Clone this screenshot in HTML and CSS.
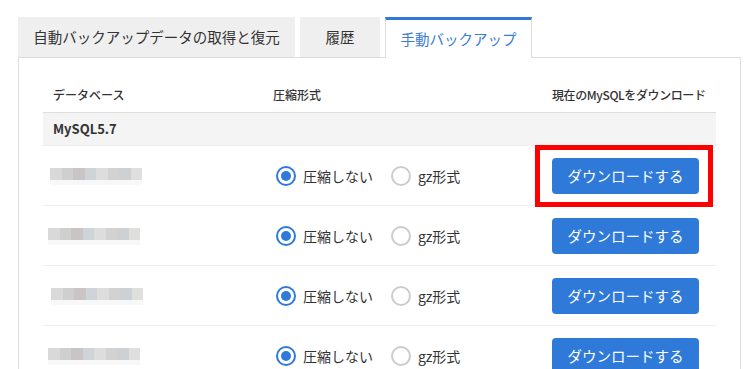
FILE: index.html
```html
<!DOCTYPE html>
<html lang="ja">
<head>
    <meta charset="UTF-8">
    <title>手動バックアップ</title>
    <link rel="stylesheet" href="styles.css">
</head>
<body>
<div class="wrap">
    <ul class="tabs">
        <li class="tab tab-auto">自動バックアップデータの取得と復元</li>
        <li class="tab tab-history">履歴</li>
        <li class="tab tab-manual current">手動バックアップ</li>
    </ul>
    <div class="panel">
        <div class="table">
            <div class="row head">
                <div class="cell">データベース</div>
                <div class="cell">圧縮形式</div>
                <div class="cell">現在のMySQLをダウンロード</div>
            </div>
            <div class="group">MySQL5.7</div>

            <div class="row">
                <div class="cell"><span class="blur"><i></i><i></i><i></i><i></i><i></i><i></i><i></i><i></i></span></div>
                <div class="cell radios">
                    <label class="radio"><span class="dot checked"></span>圧縮しない</label>
                    <label class="radio"><span class="dot"></span>gz形式</label>
                </div>
                <div class="cell"><span class="mark"><button class="btn">ダウンロードする</button></span></div>
            </div>
            <div class="row">
                <div class="cell"><span class="blur shift-l"><i></i><i></i><i></i><i></i><i></i><i></i><i></i><i></i></span></div>
                <div class="cell radios">
                    <label class="radio"><span class="dot checked"></span>圧縮しない</label>
                    <label class="radio"><span class="dot"></span>gz形式</label>
                </div>
                <div class="cell"><button class="btn">ダウンロードする</button></div>
            </div>
            <div class="row">
                <div class="cell"><span class="blur shift-r"><i></i><i></i><i></i><i></i><i></i><i></i><i></i><i></i></span></div>
                <div class="cell radios">
                    <label class="radio"><span class="dot checked"></span>圧縮しない</label>
                    <label class="radio"><span class="dot"></span>gz形式</label>
                </div>
                <div class="cell"><button class="btn">ダウンロードする</button></div>
            </div>
            <div class="row">
                <div class="cell"><span class="blur shift-l"><i></i><i></i><i></i><i></i><i></i><i></i><i></i><i></i></span></div>
                <div class="cell radios">
                    <label class="radio"><span class="dot checked"></span>圧縮しない</label>
                    <label class="radio"><span class="dot"></span>gz形式</label>
                </div>
                <div class="cell"><button class="btn">ダウンロードする</button></div>
            </div>
        </div>
    </div>
</div>
</body>
</html>
```

FILE: styles.css
```css
* {
    margin: 0;
    padding: 0;
    box-sizing: border-box;
}

ul {
    list-style: none;
}

html, body {
    height: 369px;
    overflow: hidden;
}

body {
    background-color: #fff;
    color: #333;
    font-family: "Noto Sans CJK JP", "Noto Sans", sans-serif;
}

.wrap {
    padding: 17px 0 0 18px;
    width: 741px;
}

/* tabs */
.tabs {
    display: flex;
    gap: 5px;
}

.tab {
    height: 40px;
    line-height: 40px;
    text-align: center;
    font-size: 14.5px;
    background-color: #efefef;
    color: #333;
}

.tab-auto {
    width: 277px;
}

.tab-history {
    width: 80px;
}

.tab-manual {
    width: 147px;
}

.tab.current {
    background-color: #fff;
    color: #3a7bd5;
    border: 1px solid #ddd;
    border-top: 3px solid #2f7ad8;
    border-bottom: none;
    line-height: 37px;
    position: relative;
    z-index: 1;
    margin-bottom: -1px;
    height: 41px;
}

.panel {
    border: 1px solid #ddd;
    border-bottom: none;
    padding: 19px 24px 0 24px;
    height: 312px;
    overflow: hidden;
}

/* table */
.table {
    width: 673px;
}

.row {
    display: grid;
    grid-template-columns: 220px 279px 174px;
    align-items: center;
    height: 60px;
    border-bottom: 1px solid #eee;
}

.row .cell {
    padding-left: 10px;
}

.row.head {
    height: 36px;
    border-bottom: 1px solid #ddd;
    font-size: 12px;
    font-weight: 500;
    color: #333;
}

.row.head .cell:last-child {
    letter-spacing: -0.4px;
}

.group {
    height: 33px;
    line-height: 31px;
    background-color: #f4f4f4;
    border-bottom: 1px solid #eee;
    padding-left: 10px;
    font-size: 13px;
    font-weight: bold;
    color: #333;
}

/* pixelated names */
.blur {
    display: flex;
    width: 92px;
    height: 17px;
    margin-top: 1px;
    margin-left: -3px;
    background: linear-gradient(to bottom, transparent 12px, #f8f8f8 12px);
}

.blur.shift-l {
    margin-left: -5px;
}

.blur.shift-r {
    margin-left: -2px;
}

.blur i {
    flex: 1;
    height: 12px;
}

.blur i:nth-child(1) { background-color: #d9d9d9; }
.blur i:nth-child(2) { background-color: #cfcfcf; }
.blur i:nth-child(3) { background-color: #c9c5c4; }
.blur i:nth-child(4) { background-color: #cfd4d8; }
.blur i:nth-child(5) { background-color: #dddddd; }
.blur i:nth-child(6) { background-color: #d2d2d2; }
.blur i:nth-child(7) { background-color: #cdd1d4; }
.blur i:nth-child(8) { background-color: #dfe0de; }

/* radios */
.radios {
    display: flex;
    align-items: center;
}

.row .radios {
    padding-left: 13px;
}

.radio {
    display: flex;
    align-items: center;
    font-size: 14px;
    color: #333;
}

.radio:first-child {
    width: 115px;
}

.dot {
    width: 20px;
    height: 20px;
    border-radius: 50%;
    border: 2px solid #ccc;
    margin-right: 7px;
    position: relative;
}

.dot.checked {
    border-color: #2f7ad8;
}

.dot.checked::after {
    content: "";
    position: absolute;
    left: 3px;
    top: 3px;
    width: 10px;
    height: 10px;
    border-radius: 50%;
    background-color: #2f7ad8;
}

/* button */
.btn {
    width: 147px;
    height: 36px;
    border: none;
    border-radius: 4px;
    background-color: #2f7ad8;
    color: #fff;
    font-family: "Noto Sans CJK JP", "Noto Sans", sans-serif;
    font-size: 14.5px;
    cursor: pointer;
    display: block;
}

.mark {
    display: block;
    position: relative;
    width: 147px;
}

.mark::after {
    content: "";
    position: absolute;
    left: -17px;
    right: -14px;
    top: -13px;
    bottom: -13px;
    border: 5px solid #f00;
}
```
